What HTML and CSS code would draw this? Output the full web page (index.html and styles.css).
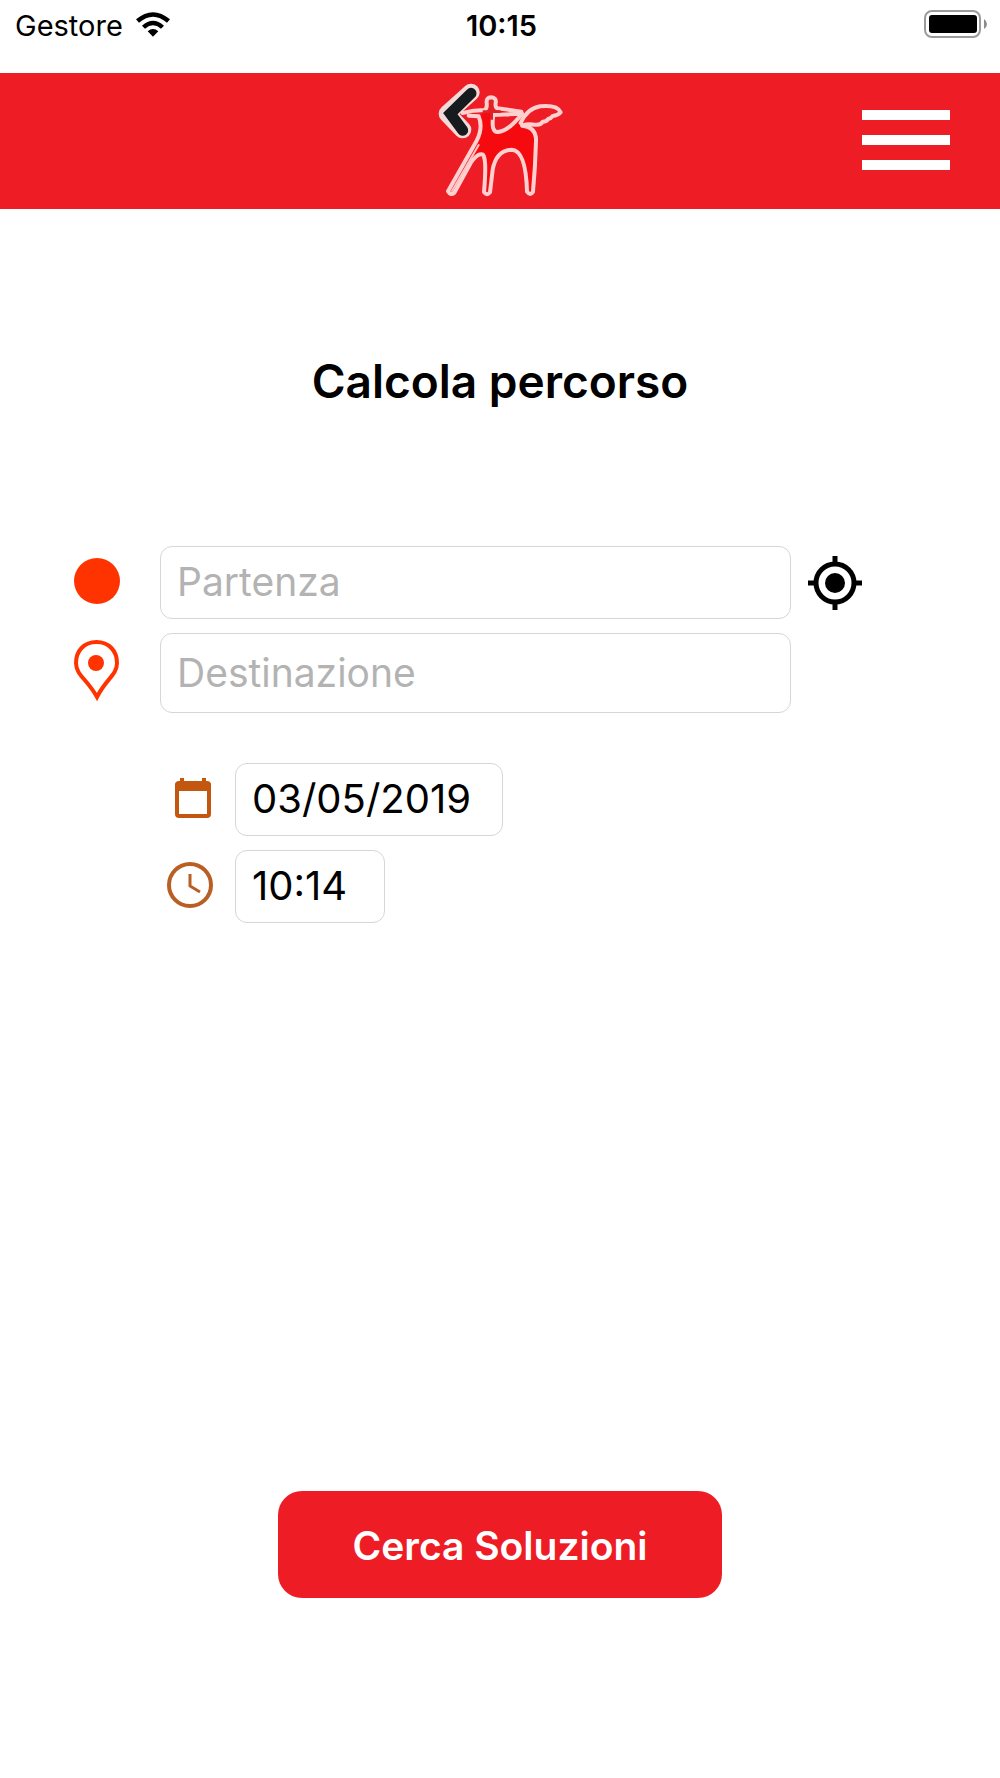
FILE: index.html
```
<!DOCTYPE html>
<html lang="it">
<head>
    <meta charset="UTF-8">
    <meta name="viewport" content="width=device-width, initial-scale=1">
    <title>Calcola percorso</title>
    <link rel="stylesheet" href="styles.css">
</head>
<body>
    <div class="status-bar">
        <div class="carrier">
            <span>Gestore</span>
            <svg class="wifi" viewBox="0 0 102 75" aria-hidden="true">
                <path d="M0 22 Q51 -21 102 22 L93 32 Q51 -4 9 32 Z"/>
                <path d="M18 41 Q51 12 84 41 L75 50 Q51 30 27 50 Z"/>
                <path d="M35 58 Q51 44 67 58 L51 74 Z"/>
            </svg>
        </div>
        <div class="clock">10:15</div>
        <div class="battery-wrap">
            <svg class="battery" viewBox="0 0 64 28" aria-hidden="true">
                <rect x="1" y="1" width="55" height="26" rx="7" fill="#fff" stroke="#9b9b9b" stroke-width="2"/>
                <rect x="5" y="5" width="48" height="18" rx="3"/>
                <path d="M60 9 Q63 11 63 14 Q63 17 60 19 Z" fill="#8c8c8c"/>
            </svg>
        </div>
    </div>

    <header class="header">
        <a href="#" class="logo" aria-label="Indietro">
            <svg viewBox="38 40 375 342" aria-hidden="true">
                <!-- horse body, legs and tail -->
                <path d="M160 142 L185 124 H285 L290 150 L288 166 Q334 172 332 215 Q330 290 315 370 Q302 242 259 240 Q213 242 202 300 L185 370 Q186 252 169 254 Q155 252 136 280 L150 220 Q174 174 160 142 Z" fill="#f50a10"/>
                <g fill="none" stroke="#ffd0d0" stroke-width="12" stroke-linejoin="round" stroke-linecap="round">
                    <path d="M112 130 L145 123 L178 121 Q186 116 184 100 Q182 83 198 83 Q214 84 211 100 Q209 112 216 116 L288 126"/>
                    <path d="M204 136 Q196 188 218 187 Q250 184 290 132 Z" fill="#ee1c25"/>
                    <path d="M286 160 Q306 116 345 110 Q396 105 406 128 Q398 138 382 139 Q378 146 368 148 Q365 156 352 156 Q346 168 328 165 Q306 162 290 168 Q334 172 332 215 Q330 290 323 366 Q315 380 305 366 Q302 242 259 240 Q213 242 202 300 L194 368 Q184 380 176 367 Q186 252 169 254 Q155 252 136 280 L87 369 Q76 379 68 365 L154 213 Q174 174 160 140 L130 138"/>
                </g>
                <path d="M80 364 L160 226" fill="none" stroke="#ffc4c4" stroke-width="6" stroke-linecap="round"/>
                <path d="M199 92 V150 M172 126 H226" stroke="#d9252a" stroke-width="8"/>
                <!-- back arrow -->
                <path d="M137 68 L66 132 L112 180" fill="none" stroke="#f5dada" stroke-width="52" stroke-linecap="round" stroke-linejoin="round"/>
                <path d="M137 71 L75 132 L112 182" fill="none" stroke="#171b1d" stroke-width="33" stroke-linecap="round"/>
            </svg>
        </a>
        <button type="button" class="menu" aria-label="Menu">
            <span></span>
            <span></span>
            <span></span>
        </button>
    </header>

    <main class="content">
        <h1>Calcola percorso</h1>

        <form class="route-form">
            <div class="places">
                <label for="partenza" aria-label="Partenza">
                    <svg width="46" height="46" viewBox="0 0 46 46"><circle cx="23" cy="23" r="23" fill="#ff3300"/></svg>
                </label>
                <input type="text" id="partenza" placeholder="Partenza">
                <button type="button" class="locate" aria-label="Usa la mia posizione">
                    <svg width="54" height="54" viewBox="0 0 54 54">
                        <circle cx="27" cy="27" r="19" fill="none" stroke="#000" stroke-width="5"/>
                        <circle cx="27" cy="27" r="10"/>
                        <path d="M27 0v8M27 46v8M0 27h8M46 27h8" stroke="#000" stroke-width="5"/>
                    </svg>
                </button>

                <label for="destinazione" aria-label="Destinazione">
                    <svg width="46" height="62" viewBox="0 0 46 62">
                        <path d="M22.500 2 C10 2 2 11 2 23 C2 35 13 39 23 57 C32 39 43 35 43 23 C43 11 35 2 22.500 2 Z" fill="none" stroke="#ff3300" stroke-width="4"/>
                        <circle cx="22" cy="23" r="8" fill="#ff3300"/>
                    </svg>
                </label>
                <input type="text" id="destinazione" class="tall" placeholder="Destinazione">
            </div>

            <div class="when">
                <label for="data" aria-label="Data">
                    <svg class="calendar" width="36" height="40" viewBox="0 0 36 40">
                        <rect x="2" y="5" width="32" height="33" rx="2" fill="none" stroke="#c4570f" stroke-width="4"/>
                        <path d="M0 13V7q0-3 4-3h1V0h4v4h18V0h4v4h1q4 0 4 3v6z" fill="#c4570f"/>
                    </svg>
                </label>
                <input type="text" id="data" class="date" value="03/05/2019">
                <label for="ora" aria-label="Ora">
                    <svg width="46" height="46" viewBox="0 0 46 46" fill="none" stroke="#b95e24">
                        <circle cx="23" cy="23" r="21" stroke-width="4"/>
                        <path d="M23 12V24L33 30" stroke-width="3"/>
                    </svg>
                </label>
                <input type="text" id="ora" class="time" value="10:14">
            </div>

            <button type="submit" class="search">Cerca Soluzioni</button>
        </form>
    </main>
</body>
</html>
```
FILE: styles.css
```
* {
    box-sizing: border-box;
}
body {
    font-family: Inter, "Liberation Sans", sans-serif;
    background-color: #fff;
    display: flex;
    flex-direction: column;
    min-height: 100vh;
    margin: 0;
    color: #000;
}
button {
    padding: 0;
    border: 0;
    background: none;
    font-family: inherit;
    cursor: pointer;
}
svg {
    display: block;
}

/* Status bar */
.status-bar {
    display: grid;
    grid-template-columns: 1fr auto 1fr;
    align-items: start;
    height: 73px;
    padding: 10px 12px 0 15px;
    font-size: 29px;
    line-height: 32px;
}
.carrier {
    display: flex;
    gap: 13px;
}
.wifi {
    width: 34px;
    height: 25px;
    margin-top: 2px;
}
.clock {
    font-weight: 600;
}
.battery {
    width: 64px;
    height: 28px;
    margin-left: auto;
}

/* Red header */
.header {
    display: grid;
    grid-template-columns: 1fr auto 1fr;
    align-items: center;
    height: 136px;
    padding: 0 50px 2px;
    background-color: #ee1c25;
}
.logo {
    grid-column: 2;
}
.logo svg {
    width: 125px;
    height: 114px;
}
.menu {
    display: flex;
    flex-direction: column;
    gap: 15px;
    width: 88px;
    justify-self: end;
}
.menu span {
    height: 10px;
    background-color: #fff;
}

/* Route form */
.content {
    flex: 1;
    display: flex;
    flex-direction: column;
    padding: 144px 0 180px;
}
h1 {
    margin: 0 0 137px;
    font-size: 46px;
    font-weight: 600;
    line-height: 56px;
    text-align: center;
}
.route-form {
    flex: 1;
    display: flex;
    flex-direction: column;
}
.places {
    display: grid;
    grid-template-columns: 46px 1fr 54px;
    align-items: center;
    row-gap: 14px;
    padding: 0 138px 0 74px;
}
.places input {
    margin: 0 17px 0 40px;
    font-size: 39px;
}
label {
    padding-bottom: 4px;
}
input {
    min-width: 0;
    height: 73px;
    padding: 0 16px 2px;
    border: 1px solid #d6d6d6;
    border-radius: 12px;
    background-color: #fff;
    color: #000;
    font-family: inherit;
    font-size: 40px;
}
input::placeholder {
    color: #b3b3b3;
    opacity: 1;
}
.places .tall {
    height: 80px;
}
.when {
    display: grid;
    grid-template-columns: 68px 1fr;
    align-items: center;
    row-gap: 14px;
    margin-top: 50px;
    padding-left: 167px;
}
.calendar {
    margin-left: 8px;
}
.date {
    width: 268px;
}
.time {
    width: 150px;
}
.search {
    align-self: center;
    width: 444px;
    height: 107px;
    padding-top: 2px;
    margin-top: auto;
    border-radius: 24px;
    background-color: #ee1c25;
    color: #fff;
    font-size: 39px;
    font-weight: 600;
}
```
